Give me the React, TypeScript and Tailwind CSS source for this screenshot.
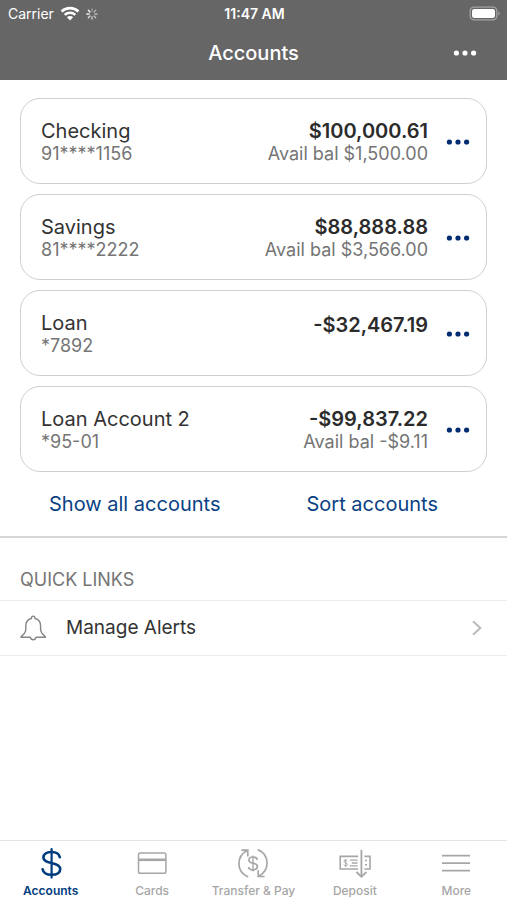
import React from 'react';

interface Account {
  id: number;
  name: string;
  number: string;
  balance: string;
  available?: string;
}

interface Tab {
  label: string;
  icon: React.ReactNode;
  active?: boolean;
}

const accounts: Account[] = [
  { id: 1, name: 'Checking', number: '91****1156', balance: '$100,000.61', available: '$1,500.00' },
  { id: 2, name: 'Savings', number: '81****2222', balance: '$88,888.88', available: '$3,566.00' },
  { id: 3, name: 'Loan', number: '*7892', balance: '-$32,467.19' },
  { id: 4, name: 'Loan Account 2', number: '*95-01', balance: '-$99,837.22', available: '-$9.11' },
];

const DotsIcon: React.FC = () => (
  <svg className="w-6 h-6" viewBox="0 0 24 24" fill="currentColor" aria-hidden="true">
    <circle cx="3.4" cy="12" r="2.6" />
    <circle cx="12" cy="12" r="2.6" />
    <circle cx="20.6" cy="12" r="2.6" />
  </svg>
);

const WifiIcon: React.FC = () => (
  <svg className="w-5 h-4" viewBox="0 0 20 16" fill="none" stroke="currentColor" aria-hidden="true">
    <path d="M1.6 5.5C6.3 1 13.7 1 18.4 5.5" strokeWidth="2.6" />
    <path d="M4.7 8.8C7.7 6 12.3 6 15.3 8.8" strokeWidth="2.5" />
    <path d="M10 14.4 6.9 11.2C8.6 9.6 11.4 9.6 13.1 11.2Z" fill="currentColor" stroke="none" />
  </svg>
);

const SpinnerIcon: React.FC = () => (
  <svg className="w-3 h-3" viewBox="0 0 12 12" stroke="currentColor" strokeWidth="1.3" strokeLinecap="round" aria-hidden="true">
    <path d="M6 .8v2.4" opacity=".4" />
    <path d="M9.7 2.3 8 4" opacity=".5" />
    <path d="M11.2 6H8.8" opacity=".55" />
    <path d="M9.7 9.7 8 8" opacity=".6" />
    <path d="M6 11.2V8.8" opacity=".7" />
    <path d="M2.3 9.7 4 8" opacity=".8" />
    <path d="M.8 6h2.4" opacity=".9" />
    <path d="M2.3 2.3 4 4" />
  </svg>
);

const BatteryIcon: React.FC = () => (
  <svg className="w-8 h-4" viewBox="0 0 32 16" aria-hidden="true">
    <rect x="1.2" y="1.2" width="26.6" height="12.6" rx="3.8" fill="none" stroke="#a3a3a3" strokeWidth="1.3" />
    <rect x="3" y="3" width="23" height="9" rx="2.2" fill="#fff" />
    <path d="M29.4 5.3C31.2 6.1 31.2 8.9 29.4 9.7Z" fill="#a3a3a3" />
  </svg>
);

const BellIcon: React.FC = () => (
  <svg className="w-7 h-7" viewBox="0 0 28 28" fill="none" stroke="#858585" strokeWidth="1.4" strokeLinejoin="round" aria-hidden="true">
    <path d="M11.4 4.5C11.4 1.3 15 1.3 15 4.5C18.9 5.4 20.6 8.3 20.6 12V15.6C20.6 18.8 22.7 20.6 25.4 22.8V23.3H16C15.4 26.5 11 26.5 10.4 23.3H1V22.8C3.7 20.6 5.8 18.8 5.8 15.6V12C5.8 8.3 7.5 5.4 11.4 4.5Z" />
  </svg>
);

const ChevronIcon: React.FC = () => (
  <svg className="w-3 h-4" viewBox="0 0 12 16" fill="none" stroke="#b9b9b9" strokeWidth="1.9" aria-hidden="true">
    <path d="M2 1.2 9.3 8 2 14.8" />
  </svg>
);

const DollarIcon: React.FC = () => (
  <svg className="w-8 h-8" viewBox="0 0 32 32" fill="none" stroke="currentColor" strokeWidth="2.6" strokeLinecap="round" aria-hidden="true">
    <path d="M16.6 2.2v28.4" strokeWidth="2.2" />
    <path d="M24.8 10.2C24 6.6 21 5 16.5 5C11.4 5 8.4 7.2 8.4 10.4C8.4 14 11.8 15 16.5 16C21.4 17 25.2 18.3 25.2 22C25.2 25.8 21.6 27.8 16.5 27.8C11.6 27.8 8.4 26 7.6 22.2" />
  </svg>
);

const CardIcon: React.FC = () => (
  <svg className="w-8 h-8" viewBox="0 0 32 32" fill="none" stroke="currentColor" strokeWidth="1.5" aria-hidden="true">
    <rect x="2.5" y="6" width="27.4" height="20.2" rx="1.8" />
    <path d="M2.5 12.8h27.4" strokeWidth="2.6" />
  </svg>
);

const TransferIcon: React.FC = () => (
  <svg className="w-8 h-8" viewBox="0 0 32 32" fill="none" stroke="currentColor" strokeWidth="1.7" aria-hidden="true">
    <path d="M11.2 30C-1.4 24.6-.6 9 10.2 3.4" />
    <path d="M4.4 3.1H10.8V9.4" />
    <path d="M20.8 2.6C33.4 8 32.6 23.6 21.8 29.2" />
    <path d="M27.6 29.5H21.2V23.2" />
    <path d="M16 8.4v16" strokeWidth="1.3" />
    <path d="M20.3 12.8C20 10.9 18.4 10 16 10C13.6 10 11.9 11.1 11.9 13C11.9 15 13.6 15.7 16 16.2C18.6 16.8 20.4 17.5 20.4 19.6C20.4 21.6 18.6 22.8 16 22.8C13.4 22.8 11.8 21.8 11.5 19.8" strokeWidth="1.7" />
  </svg>
);

const DepositIcon: React.FC = () => (
  <svg className="w-8 h-8" viewBox="0 0 32 32" fill="none" stroke="currentColor" strokeWidth="1.6" aria-hidden="true">
    <path d="M19.2 9.4H1.2V22H19.2" />
    <path d="M25.4 9.4H31V22H25.4" />
    <path d="M22.4 2.8V29.6" strokeWidth="1.8" />
    <path d="M17.4 25 22.4 29.8 27.4 25" strokeWidth="1.8" />
    <path d="M8.3 13.9C7.8 12.6 5 12.6 5 14.2C5 16 8.4 15.4 8.4 17.4C8.4 19.2 5.3 19.1 4.8 17.7M6.7 12v8" strokeWidth="1" />
    <path d="M10.8 13.2H18.6M12.8 16H18.6M10.8 18.8H18.6" strokeWidth="1.3" />
    <path d="M26 13.4h2M26 17.8h2" strokeWidth="1.5" />
  </svg>
);

const MenuIcon: React.FC = () => (
  <svg className="w-8 h-8" viewBox="0 0 32 32" stroke="currentColor" strokeWidth="1.7" aria-hidden="true">
    <path d="M2 8.6h28M2 16.1h28M2 23.6h28" />
  </svg>
);

const tabs: Tab[] = [
  { label: 'Accounts', icon: <DollarIcon />, active: true },
  { label: 'Cards', icon: <CardIcon /> },
  { label: 'Transfer & Pay', icon: <TransferIcon /> },
  { label: 'Deposit', icon: <DepositIcon /> },
  { label: 'More', icon: <MenuIcon /> },
];

const AccountCard: React.FC<{ account: Account }> = ({ account }) => (
  <li className="flex items-center gap-4.5 rounded-[20px] border border-[#cfcfcf] pt-5 pb-4.5 pl-5 pr-4">
    <div className="flex-1 min-w-0">
      <h2 className="text-xl leading-6 text-[#333333] truncate">{account.name}</h2>
      <p className="text-lg leading-[22px] text-[#757575]">{account.number}</p>
    </div>
    <div className={`self-start text-right ${account.available ? '' : 'pt-0.5'}`}>
      <p className="text-xl leading-6 font-semibold text-[#2b2b2b]">{account.balance}</p>
      {account.available && (
        <p className="text-lg leading-[22px] text-[#757575]">Avail bal {account.available}</p>
      )}
    </div>
    <button type="button" className="text-[#002d72]" aria-label={`Options for ${account.name}`}>
      <DotsIcon />
    </button>
  </li>
);

const App: React.FC = () => {
  return (
    <div className="min-h-screen flex flex-col bg-white font-['Inter',sans-serif]">
      <header className="bg-[#666666] text-white">
        {/* Status bar */}
        <div className="grid grid-cols-3 items-center h-7 pl-2 pr-1.5 text-sm">
          <div className="flex items-center gap-1.5">
            <span>Carrier</span>
            <WifiIcon />
            <SpinnerIcon />
          </div>
          <span className="text-center font-semibold">11:47 AM</span>
          <div className="flex justify-end">
            <BatteryIcon />
          </div>
        </div>

        {/* Title bar */}
        <div className="grid grid-cols-[1fr_auto_1fr] items-center h-13 px-7.5 pb-0.5">
          <h1 className="col-start-2 text-xl font-medium">Accounts</h1>
          <button type="button" className="justify-self-end" aria-label="More options">
            <DotsIcon />
          </button>
        </div>
      </header>

      <main className="flex-1">
        <section className="pt-4.5 border-b-2 border-[#d6d6d6]">
          <ul className="space-y-2.5 px-5">
            {accounts.map((account) => (
              <AccountCard key={account.id} account={account} />
            ))}
          </ul>
          <div className="grid grid-cols-2 h-16 px-4 text-xl text-[#0a4184]">
            <button type="button">Show all accounts</button>
            <button type="button">Sort accounts</button>
          </div>
        </section>

        {/* Quick links */}
        <section>
          <h2 className="px-5 pt-7.5 pb-2 text-lg leading-6 text-[#757575]">QUICK LINKS</h2>
          <a href="#alerts" className="flex items-center h-14 pl-5 pr-6 border-y border-[#ececec]">
            <BellIcon />
            <span className="flex-1 pl-4.5 text-[19px] text-[#333333]">Manage Alerts</span>
            <ChevronIcon />
          </a>
        </section>
      </main>

      <nav className="sticky bottom-0 grid grid-cols-5 h-15 bg-white border-t border-[#e4e4e4]">
        {tabs.map((tab) => (
          <a
            key={tab.label}
            href="#"
            aria-current={tab.active ? 'page' : undefined}
            className={`flex flex-col items-center gap-1 pt-1.5 text-xs whitespace-nowrap ${
              tab.active ? 'text-[#003c7d] font-semibold' : 'text-[#a6a6a6] font-medium'
            }`}
          >
            {tab.icon}
            <span>{tab.label}</span>
          </a>
        ))}
      </nav>
    </div>
  );
};

export default App;
